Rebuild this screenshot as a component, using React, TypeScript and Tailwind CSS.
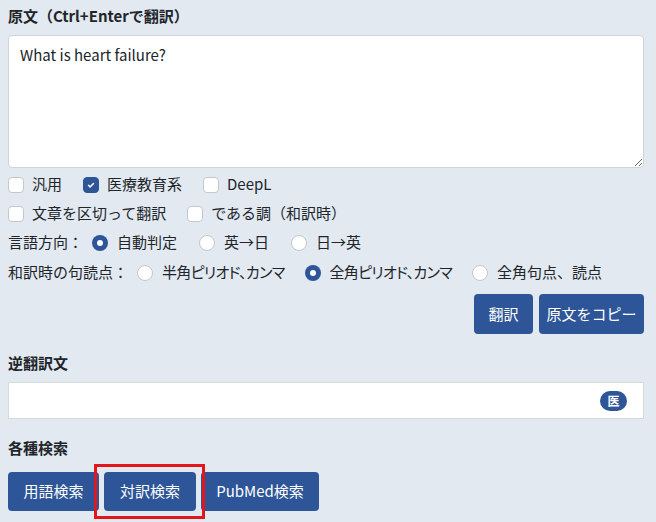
import React from "react"

const font = { fontFamily: '"Noto Sans CJK JP", "Noto Sans", sans-serif' }

function Check({ label, checked }: { label: string; checked?: boolean }) {
	return (
		<label className="flex items-center gap-2 mr-[21px] whitespace-nowrap">
			{checked ? (
				<span className="w-4 h-4 shrink-0 rounded-[4px] bg-[#2d5597] border border-[#2d5597] flex items-center justify-center">
					<svg width="10" height="10" viewBox="0 0 16 16">
						<path d="M4 8.5l2.5 2.5L12 5.5" fill="none" stroke="white" strokeWidth="2.4" strokeLinecap="round" strokeLinejoin="round" />
					</svg>
				</span>
			) : (
				<span className="w-4 h-4 shrink-0 rounded-[4px] bg-white border border-[#c4c8cc]" />
			)}
			<span>{label}</span>
		</label>
	)
}

function Radio({ label, checked, tight }: { label: string; checked?: boolean; tight?: boolean }) {
	return (
		<label className={`flex items-center gap-[9px] whitespace-nowrap ${tight ? "mr-[20px]" : "mr-[22px]"}`}>
			{checked ? (
				<span className="w-4 h-4 shrink-0 rounded-full bg-[#2d5597] flex items-center justify-center">
					<span className="w-[6px] h-[6px] rounded-full bg-white" />
				</span>
			) : (
				<span className="w-4 h-4 shrink-0 rounded-full bg-white border border-[#c4c8cc]" />
			)}
			<span className={tight ? "[font-feature-settings:'palt'] tracking-[-0.7px]" : ""}>{label}</span>
		</label>
	)
}

function Btn({ children, className = "" }: { children: React.ReactNode; className?: string }) {
	return (
		<button className={`bg-[#2d5597] text-white text-[15px] rounded-[4px] flex items-center justify-center whitespace-nowrap ${className}`}>
			{children}
		</button>
	)
}

export default function App() {
	return (
		<div className="min-h-screen bg-[#e2e9f1] text-[#212529] text-[15px]" style={font}>
			<div className="pl-2 pr-3 pt-1">
				<h2 className="h-6 leading-6 font-bold text-[15px]">原文（Ctrl+Enterで翻訳）</h2>
				<textarea
					readOnly
					defaultValue="What is heart failure?"
					className="mt-[7px] block w-full h-[133px] bg-white border border-[#d0d4d8] rounded-[4px] px-[11px] py-[8px] leading-[22px] text-[15px] outline-none"
				/>

				<div className="mt-[2px] h-[29px] flex items-center">
					<Check label="汎用" />
					<Check label="医療教育系" checked />
					<Check label="DeepL" />
				</div>
				<div className="h-[29px] flex items-center">
					<Check label="文章を区切って翻訳" />
					<Check label="である調（和訳時）" />
				</div>
				<div className="h-[29px] flex items-center">
					<span className="mr-[9px] whitespace-nowrap">言語方向：</span>
					<Radio label="自動判定" checked />
					<Radio label="英→日" />
					<Radio label="日→英" />
				</div>
				<div className="h-[31px] flex items-center">
					<span className="mr-[9px] whitespace-nowrap">和訳時の句読点：</span>
					<Radio label="半角ピリオド、カンマ" tight />
					<Radio label="全角ピリオド、カンマ" checked tight />
					<Radio label="全角句点、読点" />
				</div>

				<div className="mt-[6px] flex justify-end gap-[6px]">
					<Btn className="w-[59px] h-10">翻訳</Btn>
					<Btn className="w-[105px] h-10">原文をコピー</Btn>
				</div>

				<h2 className="mt-[17px] h-6 leading-6 font-bold text-[15px]">逆翻訳文</h2>
				<div className="mt-[7px] h-[37px] bg-white border border-[#d6dadd] flex items-center justify-end pr-[16px]">
					<span className="w-[27px] h-[20px] rounded-full bg-[#2d5597] text-white text-[12px] font-bold flex items-center justify-center">
						医
					</span>
				</div>

				<h2 className="mt-[17px] h-6 leading-6 font-bold text-[15px]">各種検索</h2>
				<div className="mt-3 flex gap-[5px]">
					<Btn className="w-[91px] h-[39px]">用語検索</Btn>
					<span className="relative">
						<Btn className="w-[92px] h-[39px]">対訳検索</Btn>
						<span className="absolute -left-[10px] -right-[9px] -top-[8px] -bottom-[8px] border-[3px] border-[#e3161b] pointer-events-none" />
					</span>
					<Btn className="w-[118px] h-[39px]">PubMed検索</Btn>
				</div>
			</div>
		</div>
	)
}
